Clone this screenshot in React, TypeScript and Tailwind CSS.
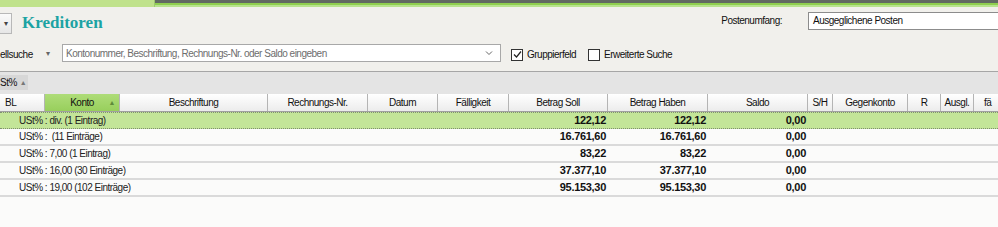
import React from 'react';

const cols = [
  { label: 'BL', w: 45 },
  { label: 'Konto', w: 75 },
  { label: 'Beschriftung', w: 148 },
  { label: 'Rechnungs-Nr.', w: 100 },
  { label: 'Datum', w: 70 },
  { label: 'Fälligkeit', w: 71 },
  { label: 'Betrag Soll', w: 99 },
  { label: 'Betrag Haben', w: 100 },
  { label: 'Saldo', w: 100 },
  { label: 'S/H', w: 25 },
  { label: 'Gegenkonto', w: 75 },
  { label: 'R', w: 33 },
  { label: 'Ausgl.', w: 33 },
  { label: 'fä', w: 60 },
];

const groups = [
  { label: 'USt% : div. (1 Eintrag)', soll: '122,12', haben: '122,12', saldo: '0,00', active: true },
  { label: 'USt% :  (11 Einträge)', soll: '16.761,60', haben: '16.761,60', saldo: '0,00' },
  { label: 'USt% : 7,00 (1 Eintrag)', soll: '83,22', haben: '83,22', saldo: '0,00' },
  { label: 'USt% : 16,00 (30 Einträge)', soll: '37.377,10', haben: '37.377,10', saldo: '0,00' },
  { label: 'USt% : 19,00 (102 Einträge)', soll: '95.153,30', haben: '95.153,30', saldo: '0,00' },
];

function Checkbox({ checked }: { checked?: boolean }) {
  return (
    <span className="w-[12px] h-[12px] border border-[#333] bg-white flex items-center justify-center">
      {checked && (
        <svg width="9" height="9" viewBox="0 0 9 9">
          <path d="M1 4.5 L3.5 7 L8 1.5" fill="none" stroke="#222" strokeWidth="1.2" />
        </svg>
      )}
    </span>
  );
}

export default function App() {
  return (
    <div
      className="w-[998px] h-[227px] overflow-hidden bg-[#f1f0ec] flex flex-col text-[10px] tracking-[-0.5px] text-[#111]"
      style={{ fontFamily: '"Liberation Sans", Arial, sans-serif' }}
    >
      {/* top band */}
      <div className="h-[7px] flex shrink-0">
        <div className="w-[155px] bg-[#c0e28c] border-r border-[#9fc870]"></div>
        <div className="flex-1 flex flex-col">
          <div className="h-[3px] bg-[#626a62]"></div>
          <div className="h-[2px] bg-[#8fcf4f]"></div>
          <div className="h-[2px] bg-[#b8e38e]"></div>
        </div>
      </div>

      {/* title row */}
      <div className="h-[36px] flex items-start shrink-0">
        <div className="mt-[6px] w-[12px] h-[21px] bg-gradient-to-b from-[#fbfbfb] to-[#e6e6e6] border border-l-0 border-[#b8b8b8] flex items-center justify-center text-[8px] text-[#444]">
          ▾
        </div>
        <div
          className="ml-[10px] mt-[5px] text-[17px] font-bold tracking-normal text-[#1ca3a3] leading-[22px]"
          style={{ fontFamily: '"Liberation Serif", "Times New Roman", serif' }}
        >
          Kreditoren
        </div>
        <div className="ml-auto mt-[5px] flex items-center">
          <span className="mr-[26px] leading-[18px]">Postenumfang:</span>
          <div className="w-[190px] h-[18px] bg-white border border-[#8c8c8c] border-r-0 pl-[4px] leading-[16px]">
            Ausgeglichene Posten
          </div>
        </div>
      </div>

      {/* search row */}
      <div className="h-[29px] flex items-start shrink-0 border-b border-[#a6a6a6]">
        <span className="mt-[4px] leading-[16px] w-[46px]">ellsuche</span>
        <span className="mt-[3px] text-[8px] text-[#666] w-[16px] leading-[16px]">▾</span>
        <div className="mt-[1px] w-[439px] h-[18px] bg-white border border-[#a8a8a8] flex items-center pl-[3px] text-[#6d6d6d]">
          <span className="flex-1">Kontonummer, Beschriftung, Rechnungs-Nr. oder Saldo eingeben</span>
          <svg width="10" height="8" viewBox="0 0 10 8" className="mr-[6px]">
            <path d="M2 2.5 L5 5.5 L8 2.5" fill="none" stroke="#666" strokeWidth="1" />
          </svg>
        </div>
        <div className="mt-[4px] ml-[10px] flex items-center">
          <Checkbox checked />
          <span className="ml-[4px]">Gruppierfeld</span>
        </div>
        <div className="mt-[4px] ml-[12px] flex items-center">
          <Checkbox />
          <span className="ml-[4px]">Erweiterte Suche</span>
        </div>
      </div>

      {/* group panel */}
      <div className="h-[22px] bg-[#e4e4e4] flex items-start shrink-0">
        <div className="mt-[3px] h-[15px] w-[28px] bg-[#d7d7d7] flex items-center leading-[15px]">
          <span>St%</span>
          <span className="ml-[3px] text-[7px] text-[#777]">▲</span>
        </div>
      </div>

      {/* header row */}
      <div className="h-[18px] flex shrink-0 bg-white border-b border-[#a0a0a0]">
        {cols.map((c, i) => (
          <div
            key={c.label}
            className={`shrink-0 h-full flex items-center border-r border-[#b4b4b4] relative ${
              i === 1
                ? 'bg-gradient-to-b from-[#aedc78] to-[#98cf5c] justify-center'
                : i === 0
                ? 'bg-gradient-to-b from-[#ffffff] to-[#ececec] pl-[5px]'
                : i === 13
                ? 'bg-gradient-to-b from-[#ffffff] to-[#ececec] pl-[10px]'
                : 'bg-gradient-to-b from-[#ffffff] to-[#ececec] justify-center'
            }`}
            style={{ width: c.w }}
          >
            {c.label}
            {i === 1 && (
              <span className="absolute right-[4px] top-[4px] text-[7px] text-[#5f8a3a]">▲</span>
            )}
          </div>
        ))}
      </div>

      {/* group rows */}
      {groups.map(g => (
        <div
          key={g.label}
          className={`h-[17px] flex shrink-0 items-center ${
            g.active
              ? 'bg-[#c3e598] border-y border-dotted border-[#7f8f70]'
              : 'bg-[#fbfbfa] border-b-2 border-[#dadada]'
          }`}
        >
          <div className="w-[509px] shrink-0 pl-[19px] text-[#222] whitespace-pre">{g.label}</div>
          <div className="w-[99px] shrink-0 text-right pr-[2px] font-bold text-[11px] tracking-[-0.3px]">{g.soll}</div>
          <div className="w-[100px] shrink-0 text-right pr-[2px] font-bold text-[11px] tracking-[-0.3px]">{g.haben}</div>
          <div className="w-[100px] shrink-0 text-right pr-[2px] font-bold text-[11px] tracking-[-0.3px]">{g.saldo}</div>
        </div>
      ))}

      <div className="flex-1 bg-[#fbfbfa]"></div>
    </div>
  );
}
